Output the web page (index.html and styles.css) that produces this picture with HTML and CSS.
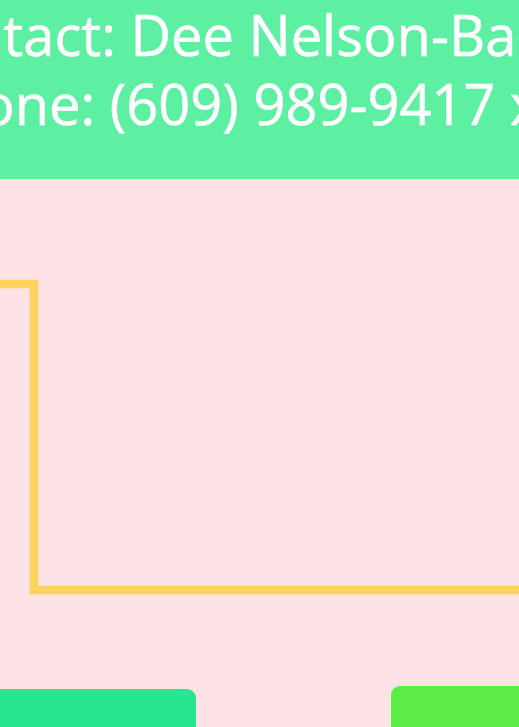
FILE: index.html
```html
<!DOCTYPE html>
<html lang="en">
<head>
<meta charset="utf-8">
<title>Contact</title>
<link rel="stylesheet" href="styles.css">
</head>
<body>
<div class="page">
  <header class="banner">
    <div class="line line-1">Contact: Dee Nelson-Baker</div>
    <div class="line line-2">Phone: (609) 989-9417 x123</div>
  </header>
  <main class="canvas">
    <svg class="trace" width="519" height="507" viewBox="0 0 519 507" aria-hidden="true">
      <polyline points="-10,105 34,105 34,411 530,411" fill="none" stroke="#ffd25c" stroke-width="8.5" stroke-linejoin="miter"/>
    </svg>
  </main>
  <footer class="actions">
    <div class="btn btn-left"></div>
    <div class="btn btn-right"></div>
  </footer>
</div>
</body>
</html>
```
FILE: styles.css
```css
html, body {
  margin: 0;
  padding: 0;
  background: #fde3e6;
  overflow: hidden;
}
.page {
  width: 519px;
  height: 727px;
  display: flex;
  flex-direction: column;
  overflow: hidden;
}
.banner {
  height: 179px;
  flex: none;
  background: #5ef0a2;
  color: #ffffff;
  font-family: "Open Sans", "Noto Sans", sans-serif;
  font-size: 56px;
  line-height: 69px;
  -webkit-text-stroke: 0.6px #ffffff;
  box-sizing: border-box;
  overflow: hidden;
  white-space: nowrap;
}
.line-1 {
  margin-left: -100px;
}
.line-2 {
  margin-left: -87px;
}
.canvas {
  height: 507px;
  flex: none;
}
.trace {
  display: block;
}
.actions {
  flex: none;
  height: 41px;
  display: flex;
  justify-content: space-between;
  align-items: flex-start;
}
.btn {
  height: 60px;
}
.btn-left {
  width: 196px;
  margin-top: 3px;
  background: #28e590;
  border-radius: 0 9px 0 0;
}
.btn-right {
  width: 140px;
  margin-right: -12px;
  background: #5ded47;
  border-radius: 9px 0 0 0;
}
```
